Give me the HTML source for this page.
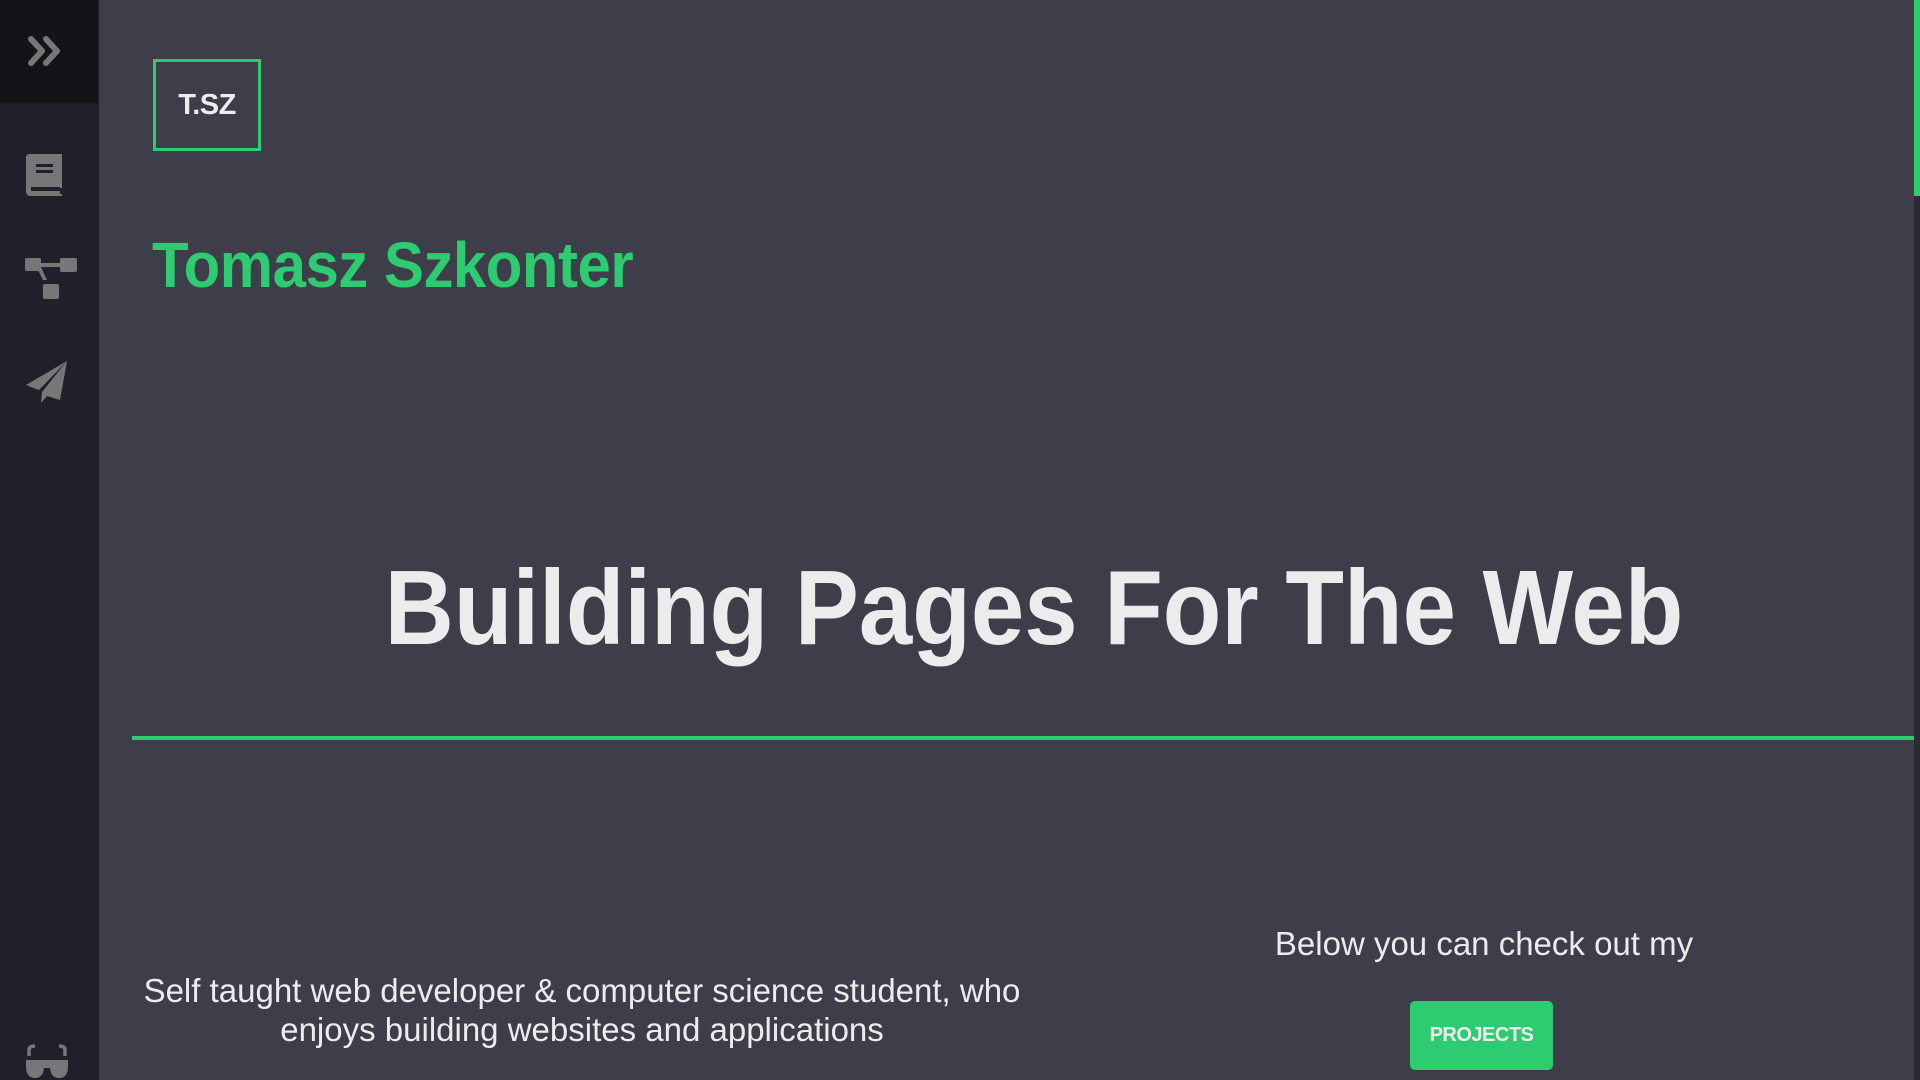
<!DOCTYPE html>
<html><head><meta charset="utf-8"><style>
*{margin:0;padding:0;box-sizing:border-box}
body{width:1920px;height:1080px;overflow:hidden;background:#3e3e4b;font-family:"Liberation Sans",Arial,sans-serif;position:relative;color:#ececec}
.side{position:absolute;left:0;top:0;width:99px;height:1080px;background:#20202a}
.top{position:absolute;left:0;top:0;width:98px;height:103px;background:#131318}
.ic{position:absolute;fill:#777;}
.logo{position:absolute;left:153px;top:59px;width:108px;height:92px;border:3px solid #2ecc71;display:flex;align-items:center;justify-content:center;font-weight:bold;font-size:29px;color:#ececec;letter-spacing:-0.5px}
.name{position:absolute;left:152px;top:228px;font-weight:bold;font-size:64px;color:#2ecc71;letter-spacing:-0.5px;transform:scaleX(0.936);transform-origin:left}
.h1{position:absolute;left:84px;width:1900px;text-align:center;top:555px;font-weight:bold;font-size:106px;line-height:1;transform:scaleX(0.905)}
.line{position:absolute;left:132px;top:736px;width:1782px;height:4px;background:#2ecc71}
.p1{position:absolute;left:132px;width:900px;text-align:center;top:971px;font-size:33px;line-height:39px}
.p2{position:absolute;left:1234px;width:500px;text-align:center;top:925px;font-size:33px}
.btn{position:absolute;left:1410px;top:1001px;width:143px;height:69px;background:#2ecc71;border-radius:5px;display:flex;align-items:center;justify-content:center;font-weight:bold;font-size:20px;color:#eee;letter-spacing:-0.5px}
.track{position:absolute;left:1914px;top:0;width:6px;height:1080px;background:#2a2a33}
.thumb{position:absolute;left:1914px;top:0;width:6px;height:196px;background:#2ecc71}
</style></head><body>
<div class="side"></div><div class="top"></div>
<svg class="ic" style="left:26px;top:34px" width="42" height="34" viewBox="0 0 42 34"><path d="M5 5 L16 17 L5 29 M20 5 L31 17 L20 29" stroke="#777" stroke-width="6" fill="none" stroke-linecap="round" stroke-linejoin="round"/></svg>
<svg class="ic" style="left:25px;top:154px" width="38" height="42" viewBox="0 0 38 42"><path d="M5 0 H37 V34 H35 V40 H37 V42 H6 Q1 42 1 37 V4 Q1 0 5 0 Z"/><rect x="11" y="10" width="17" height="3" fill="#20202a"/><rect x="11" y="16" width="17" height="3" fill="#20202a"/><rect x="6" y="33" width="29" height="4" fill="#20202a"/></svg>
<svg class="ic" style="left:25px;top:256px" width="54" height="44" viewBox="0 0 54 44"><rect x="0" y="2" width="16" height="13" rx="2"/><rect x="35" y="2" width="17" height="14" rx="2"/><rect x="18" y="28" width="16" height="15" rx="2"/><rect x="14" y="7" width="22" height="4"/><path d="M12 12 L18 24 L22 24 L16 11 Z"/></svg>
<svg class="ic" style="left:25px;top:360px" width="44" height="44" viewBox="0 0 44 44"><path d="M42 1 L1 25 L14 30 L42 1 L17 32 L16 43 L22 36 L35 40 Z"/></svg>
<svg class="ic" style="left:25px;top:1044px" width="44" height="36" viewBox="0 0 44 36"><path d="M4 12 V6 Q4 2 10 2 M40 12 V6 Q40 2 34 2" stroke="#777" stroke-width="3.5" fill="none"/><path d="M1 16 H43 V22 Q43 34 34 34 Q26 34 25 24 H19 Q18 34 10 34 Q1 34 1 22 Z"/></svg>
<div class="logo">T.SZ</div>
<div class="name">Tomasz Szkonter</div>
<div class="h1">Building Pages For The Web</div>
<div class="line"></div>
<div class="p1">Self taught web developer &amp; computer science student, who<br>enjoys building websites and applications</div>
<div class="p2">Below you can check out my</div>
<div class="btn">PROJECTS</div>
<div class="track"></div><div class="thumb"></div>
</body></html>
